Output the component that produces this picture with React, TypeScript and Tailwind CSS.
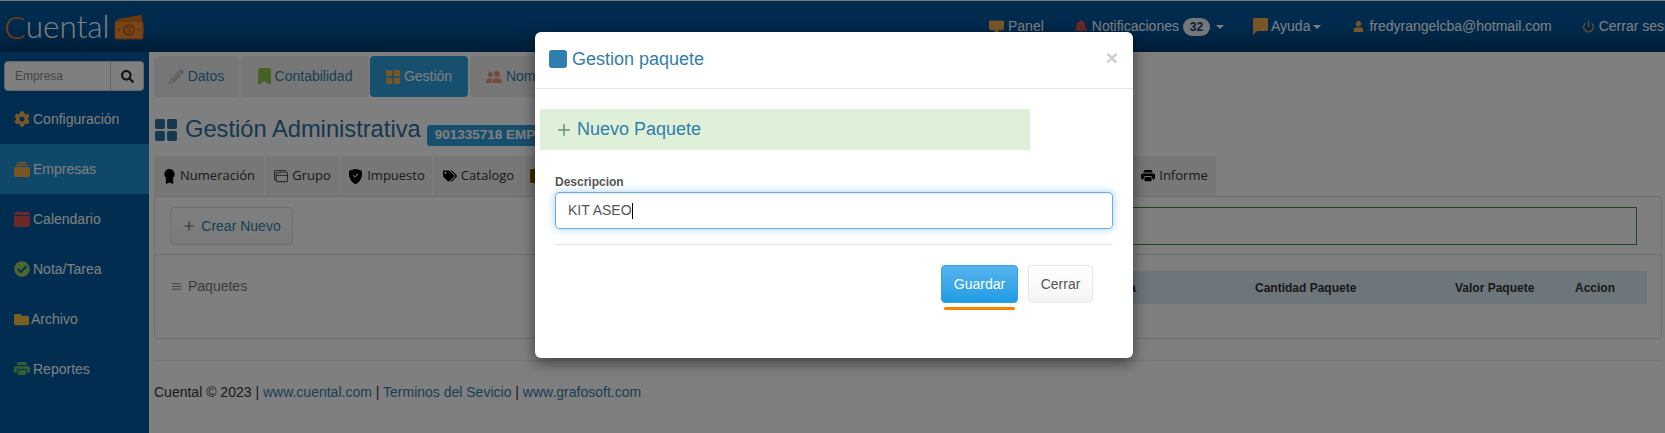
import type { ReactNode } from "react";
import { FaBell, FaBookmark, FaCheckCircle, FaCog, FaFolder, FaPencilAlt, FaSearch, FaTags, FaUser } from "react-icons/fa";
import { BsCalendarFill, BsPeopleFill, BsPrinterFill, BsShieldFillCheck, BsWindowStack } from "react-icons/bs";
import { FiMenu, FiPlus, FiPower } from "react-icons/fi";

const arial = "font-['Liberation_Sans',Arial,sans-serif]";

function MoneyIcon() {
  return (
    <svg width="31" height="25" viewBox="0 0 31 25" className="ml-[3px] mt-[1px] shrink-0">
      <rect x="5" y="2" width="25" height="16" rx="1" fill="#d9741f" transform="rotate(-10 17 10)" />
      <rect x="2" y="6" width="28" height="18" rx="1.5" fill="#f08a2c" stroke="#c9601a" />
      <circle cx="16" cy="15" r="5" fill="none" stroke="#b5551a" strokeWidth="1.4" />
      <circle cx="6" cy="15" r="1" fill="#b5551a" />
      <circle cx="26" cy="15" r="1" fill="#b5551a" />
      <path d="M18 13c-1-1-4-1-4 .6s4 .8 4 2.4-3 1.600-4 .6" fill="none" stroke="#b5551a" strokeWidth="1" />
    </svg>
  );
}

// four rounded squares, used on the Gestión tab and the page title
function GridIcon({ className }: { className: string }) {
  return (
    <svg viewBox="0 0 20 20" className={className} fill="currentColor">
      <rect x="0" y="0" width="9" height="9" rx="1.5" />
      <rect x="11" y="0" width="9" height="9" rx="1.5" />
      <rect x="0" y="11" width="9" height="9" rx="1.5" />
      <rect x="11" y="11" width="9" height="9" rx="1.5" />
    </svg>
  );
}

function PanelIcon() {
  return (
    <svg viewBox="0 0 16 14" className="mr-[4px] h-[14px] w-[15px] shrink-0 text-[#f0ad4e]" fill="currentColor">
      <rect x="0" y="0" width="16" height="10.500" rx="1.500" />
      <rect x="6" y="10" width="4" height="4" />
    </svg>
  );
}

function HelpIcon() {
  return (
    <svg viewBox="0 0 15 17" className="mr-[3px] h-[17px] w-[15px] shrink-0 text-[#f0ad4e]" fill="currentColor">
      <path d="M1 0h13a1 1 0 0 1 1 1v11a1 1 0 0 1-1 1H4l-4 4V1a1 1 0 0 1 1-1z" />
    </svg>
  );
}

function CaseIcon() {
  return (
    <svg viewBox="0 0 16 15" className="h-[15px] w-[16px] shrink-0 text-[#f0ad4e]" fill="currentColor">
      <rect x="3.500" y="0" width="9" height="1.500" rx="0.500" />
      <rect x="2" y="2.500" width="12" height="1.500" rx="0.500" />
      <rect x="0" y="5" width="16" height="10" rx="2" />
    </svg>
  );
}

function RibbonIcon() {
  return (
    <svg viewBox="0 0 14 16" className="h-[15px] w-[13px] shrink-0 text-black" fill="currentColor">
      <circle cx="7" cy="5.500" r="5.500" />
      <path d="M3 10h8v6l-4-1.500L3 16z" />
    </svg>
  );
}

function Caret() {
  return <span className="block h-0 w-0 shrink-0 border-x-4 border-t-4 border-x-transparent border-t-white" />;
}

function NavItem({ icon, text, className }: { icon: ReactNode; text: string; className: string }) {
  return (
    <span className={`flex shrink-0 items-center whitespace-nowrap ${className}`}>
      {icon}
      <span>{text}</span>
    </span>
  );
}

function SideItem({ icon, text, active, gap = "ml-[3px]" }: { icon: ReactNode; text: string; active?: boolean; gap?: string }) {
  return (
    <div className={`flex h-[50px] items-center pl-[14px] text-[14px] text-white ${active ? "bg-[#1e90d2]" : ""}`}>
      {icon}
      <span className={gap}>{text}</span>
    </div>
  );
}

function TopTab({ icon, text, width, active }: { icon: ReactNode; text: string; width: string; active?: boolean }) {
  return (
    <div
      className={`flex h-[41px] shrink-0 items-center justify-center rounded-[4px] text-[14px] ${width} ${
        active ? "bg-[#2f9fdc] text-white" : "bg-[#eeeeee] text-[#317eac]"
      }`}
    >
      {icon}
      <span className="ml-[4px] whitespace-nowrap">{text}</span>
    </div>
  );
}

function SubTab({ icon, text, width }: { icon: ReactNode; text: string; width: string }) {
  return (
    <div className={`flex h-[40px] shrink-0 items-center justify-center bg-[#eeeeee] font-['Open_Sans',sans-serif] text-[13px] text-[#333333] ${width}`}>
      {icon}
      <span className="ml-[4px]">{text}</span>
    </div>
  );
}

// the tab next to Catalogo only shows its icon beside the modal
function HiddenTabIcon() {
  return <span className="size-[14px] -translate-x-[290px] rounded-[2px] bg-[#8a4b00]" />;
}

export default function App() {
  return (
    <div className={`relative h-[433px] w-[1665px] overflow-hidden bg-white ${arial}`}>
      <div className="h-[1px] bg-[#f4f4f4]" />

      {/* Navbar */}
      <header className="flex h-[51px] items-center bg-gradient-to-b from-[#00549c] from-50% to-[#003c70] text-[14px] text-white">
        <div className="flex w-[985px] shrink-0 items-center pl-[4px]">
          <span className="font-['Lato',sans-serif] text-[32px] leading-none font-light text-[#f07a1a]">C</span>
          <span className="font-['Lato',sans-serif] text-[31.500px] leading-none font-light">uental</span>
          <MoneyIcon />
        </div>
        <NavItem icon={<PanelIcon />} text="Panel" className="ml-[4px]" />
        <NavItem icon={<FaBell className="mr-[5px] h-[15px] w-[12px] shrink-0 text-[#d9534f]" />} text="Notificaciones" className="ml-[31px]" />
        <span className="ml-[4px] flex h-[18px] w-[27px] shrink-0 items-center justify-center rounded-full bg-[#eeeeee] text-[12px] font-bold text-[#00427c]">32</span>
        <span className="ml-[6px]"><Caret /></span>
        <NavItem icon={<HelpIcon />} text="Ayuda" className="ml-[29px]" />
        <span className="ml-[3px]"><Caret /></span>
        <NavItem icon={<FaUser className="mr-[5px] size-[11px] shrink-0 text-[#f0ad4e]" />} text="fredyrangelcba@hotmail.com" className="ml-[32px]" />
        <NavItem icon={<FiPower className="mr-[4px] size-[13px] shrink-0 text-[#f0ad4e]" />} text="Cerrar sesión" className="ml-[30px]" />
      </header>

      <div className="flex h-[381px]">
        {/* Sidebar */}
        <aside className="w-[149px] shrink-0 bg-[#005aa0]">
          <div className="flex h-[42px] items-start px-[4px] pt-[9px]">
            <div className="flex h-[30px] w-[107px] items-center rounded-l-[4px] border border-[#cccccc] bg-white pl-[10px] text-[12px] text-[#888888]">Empresa</div>
            <div className="flex h-[30px] w-[33px] items-center justify-center rounded-r-[4px] border border-l-0 border-[#cccccc] bg-white">
              <FaSearch className="size-[13px] text-[#222222]" />
            </div>
          </div>
          <SideItem icon={<FaCog className="size-[16px] text-[#f0ad4e]" />} text="Configuración" />
          <SideItem icon={<CaseIcon />} text="Empresas" active />
          <SideItem icon={<BsCalendarFill className="size-[16px] text-[#d9534f]" />} text="Calendario" />
          <SideItem icon={<FaCheckCircle className="size-[16px] text-[#9ccc65]" />} text="Nota/Tarea" />
          <SideItem icon={<FaFolder className="h-[15px] w-[15px] text-[#f5c13d]" />} text="Archivo" gap="ml-[2px]" />
          <SideItem icon={<BsPrinterFill className="size-[16px] text-[#66bb6a]" />} text="Reportes" />
        </aside>

        {/* Main */}
        <main className="min-w-0 flex-1 pl-[5px] pr-[3px] pt-[4px]">
          <div className="flex">
            <TopTab icon={<FaPencilAlt className="size-[15px] text-[#c9c0b8]" />} text="Datos" width="w-[85px]" />
            <TopTab icon={<FaBookmark className="h-[17px] w-[13px] text-[#8bc34a]" />} text="Contabilidad" width="ml-[2px] w-[128px]" />
            <TopTab icon={<GridIcon className="size-[14px] text-[#f0ad4e]" />} text="Gestión" width="ml-[1px] w-[98px]" active />
            <TopTab icon={<BsPeopleFill className="size-[16px] text-[#e9967a]" />} text="Nomina" width="ml-[2px] w-[100px]" />
          </div>

          <div className="flex h-[59px] items-center pl-[1px] pt-[7px]">
            <GridIcon className="size-[22px] text-[#2a6f9e]" />
            <h1 className="ml-[8px] text-[23.700px] text-[#2a6f9e]">Gestión Administrativa</h1>
            <span className="ml-[6px] mt-[11px] flex h-[21px] w-[160px] items-center overflow-hidden whitespace-nowrap rounded-[3px] bg-[#2f9fdc] pl-[8px] text-[13.500px] font-bold text-white">901335718 EMPRESA</span>
          </div>

          <div className="flex gap-[1px]">
            <SubTab icon={<RibbonIcon />} text="Numeración" width="w-[110px]" />
            <SubTab icon={<BsWindowStack className="size-[14px] text-[#333333]" />} text="Grupo" width="w-[75px]" />
            <SubTab icon={<BsShieldFillCheck className="size-[15px] text-black" />} text="Impuesto" width="w-[91px]" />
            <SubTab icon={<FaTags className="size-[14px] text-black" />} text="Catalogo" width="w-[91px]" />
            <SubTab icon={<HiddenTabIcon />} text="" width="w-[607px]" />
            <SubTab icon={<BsPrinterFill className="size-[14px] text-black" />} text="Informe" width="w-[83px]" />
          </div>

          {/* Panel */}
          <section className="h-[143px] rounded-b-[4px] rounded-tr-[4px] border border-[#dddddd]">
            <div className="flex h-[58px] items-start border-b border-[#dddddd] pl-[15px] pr-[24px] pt-[10px]">
              <button className="flex h-[38px] w-[123px] items-center justify-center rounded-[4px] border border-[#dddddd] bg-gradient-to-b from-white to-[#f5f5f5] text-[14px] text-[#317eac]">
                <FiPlus className="mr-[5px] size-[14px] text-[#666666]" />
                Crear Nuevo
              </button>
              <div className="ml-[300px] h-[38px] flex-1 border border-[#3c8c3c]" />
            </div>
            <div className="flex items-start pl-[16px] pr-[14px] pt-[16px]">
              <div className="-mt-[1px] flex h-[33px] w-[391px] shrink-0 items-center text-[14px] text-[#777777]">
                <FiMenu className="mr-[6px] size-[11px]" />
                Paquetes
              </div>
              <div className="flex h-[33px] flex-1 items-center whitespace-nowrap bg-[#d9edf7] text-[12px] font-bold text-[#333333]">
                <span className="w-[574px] shrink-0 text-right">Tarifa</span>
                <span className="ml-[119px] w-[100px] shrink-0">Cantidad Paquete</span>
                <span className="ml-[100px] w-[79px] shrink-0">Valor Paquete</span>
                <span className="ml-[41px] shrink-0">Accion</span>
              </div>
            </div>
          </section>

          <hr className="mt-[21px] border-[#eeeeee]" />
          <footer className="mt-[21px] text-[14px] text-[#333333]">
            Cuental © 2023 | <a className="text-[#317eac]">www.cuental.com</a> | <a className="text-[#317eac]">Terminos del Sevicio</a> | <a className="text-[#317eac]">www.grafosoft.com</a>
          </footer>
        </main>
      </div>

      {/* Backdrop + modal */}
      <div className="absolute inset-0 bg-black/50" />
      <div className="absolute left-[535px] top-[32px] h-[326px] w-[598px] rounded-[6px] bg-white shadow-[0_5px_15px_rgba(0,0,0,0.5)]">
        <div className="flex h-[57px] items-center justify-between border-b border-[#e5e5e5] pl-[14px] pr-[15px]">
          <div className="-mt-[2px] flex items-center">
            <span className="size-[18px] rounded-[3px] bg-[#2e7fb0]" />
            <span className="ml-[5px] text-[18px] text-[#317eac]">Gestion paquete</span>
          </div>
          <span className="-mt-[6px] text-[21px] leading-none font-bold text-[#cfcfcf]">×</span>
        </div>
        <div className="pl-[5px] pt-[20px]">
          <div className="flex h-[41px] w-[490px] items-center bg-[#dff0d8] pl-[15px] text-[18px] text-[#317eac]">
            <FiPlus className="mr-[4px] size-[18px] text-[#6b8e6b]" />
            Nuevo Paquete
          </div>
        </div>
        <div className="px-[20px] pt-[25px]">
          <label className="block text-[12px] leading-[14px] font-bold text-[#555555]">Descripcion</label>
          <div className="mt-[3px] flex h-[37px] items-center rounded-[4px] border border-[#66afe9] pl-[12px] text-[14px] text-[#555555] shadow-[inset_0_1px_1px_rgba(0,0,0,0.075),0_0_8px_rgba(102,175,233,0.6)]">
            KIT ASEO
            <span className="h-[16px] w-[1px] bg-black" />
          </div>
          <hr className="mt-[15px] border-[#e5e5e5]" />
          <div className="mt-[20px] flex items-start justify-end pr-[20px]">
            <div>
              <button className="flex h-[38px] w-[77px] items-center justify-center rounded-[4px] border border-[#2fa4e7] bg-gradient-to-b from-[#54b4eb] to-[#1d9ce5] text-[14px] text-white">Guardar</button>
              <div className="mx-[3px] mt-[4px] h-[3px] rounded-full bg-[#ff8000]" />
            </div>
            <button className="ml-[10px] flex h-[38px] w-[65px] items-center justify-center rounded-[4px] border border-[#e5e5e5] bg-gradient-to-b from-white to-[#f5f5f5] text-[14px] text-[#555555]">Cerrar</button>
          </div>
        </div>
      </div>
    </div>
  );
}
